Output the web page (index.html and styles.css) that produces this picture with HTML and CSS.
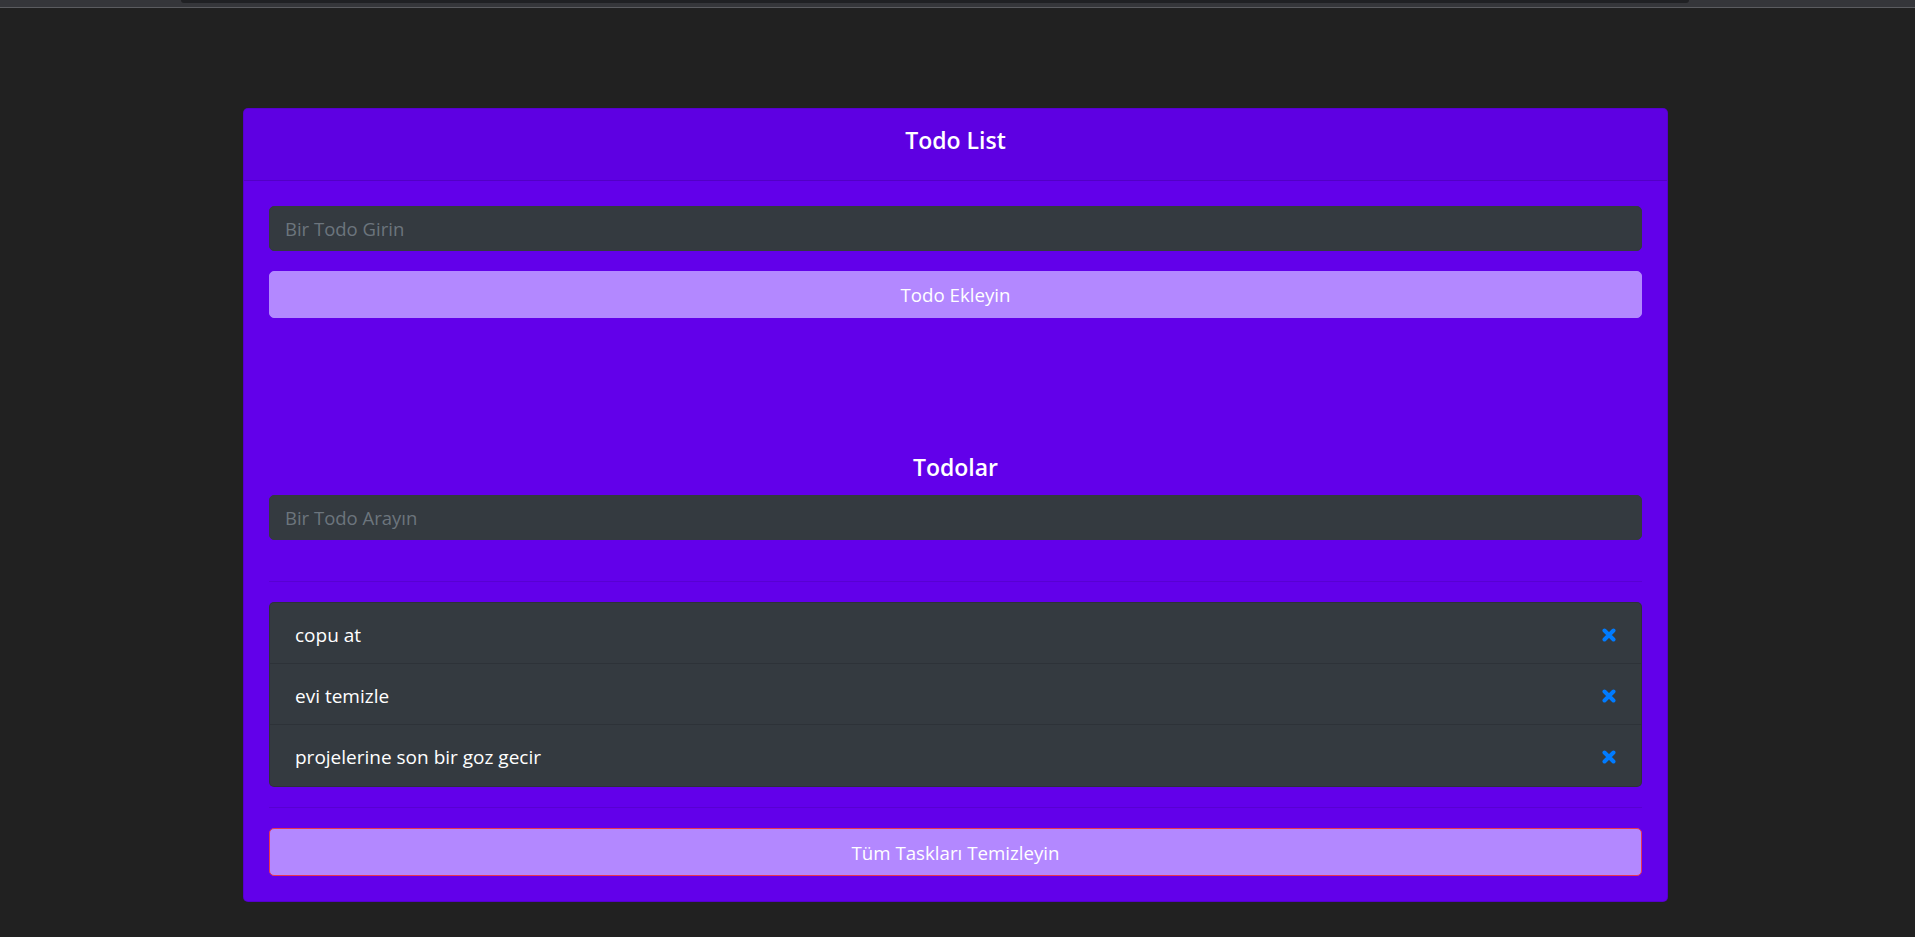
FILE: index.html
```html
<!DOCTYPE html>
<html lang="tr">
<head>
<meta charset="utf-8">
<title>Todo List</title>
<link rel="stylesheet" href="styles.css">
</head>
<body>
<div class="chrome"><div class="chrome-tab"></div></div>
<main class="page">
  <section class="card">
    <header class="card-header">
      <h5 class="card-title">Todo List</h5>
    </header>
    <div class="card-body">
      <form class="add-form">
        <input class="field" type="text" placeholder="Bir Todo Girin">
        <button class="btn btn-add" type="button">Todo Ekleyin</button>
      </form>
      <h5 class="section-title">Todolar</h5>
      <input class="field" type="text" placeholder="Bir Todo Arayın">
      <hr class="divider divider-search">
      <ul class="list">
        <li class="list-item"><span>copu at</span>
          <svg class="del" viewBox="0 0 14 14" aria-hidden="true"><path d="M2.5 2.5 L11.5 11.5 M11.5 2.5 L2.5 11.5"/></svg></li>
        <li class="list-item"><span>evi temizle</span>
          <svg class="del" viewBox="0 0 14 14" aria-hidden="true"><path d="M2.5 2.5 L11.5 11.5 M11.5 2.5 L2.5 11.5"/></svg></li>
        <li class="list-item"><span>projelerine son bir goz gecir</span>
          <svg class="del" viewBox="0 0 14 14" aria-hidden="true"><path d="M2.5 2.5 L11.5 11.5 M11.5 2.5 L2.5 11.5"/></svg></li>
      </ul>
      <hr class="divider">
      <button class="btn btn-clear" type="button">Tüm Taskları Temizleyin</button>
    </div>
  </section>
</main>
</body>
</html>
```

FILE: styles.css
```css
* { box-sizing: border-box; }
html, body { margin: 0; padding: 0; }
body {
  background: #212121;
  font-family: "Open Sans", "Noto Sans", "Liberation Sans", sans-serif;
  font-size: 20px;
  color: #fff;
  height: 937px;
  overflow: hidden;
}
.chrome {
  height: 8px;
  background: #35363a;
  border-bottom: 1px solid #5b5c60;
  display: flex;
  padding-left: 181px;
}
.chrome-tab {
  width: 1508px;
  height: 3px;
  background: #202124;
  border-radius: 0 0 3px 3px;
}
.page {
  padding: 100px 0 0 243px;
}
.card {
  width: 1425px;
  background: #6200ea;
  border: 1px solid rgba(0,0,0,.125);
  border-radius: 5px;
  overflow: hidden;
}
.card-header {
  background: rgba(0,0,0,.03);
  border-bottom: 1px solid rgba(0,0,0,.125);
  padding: 16px 25px 15px;
  text-align: center;
}
.card-title, .section-title {
  margin: 0 0 10px;
  font-size: 23px;
  font-weight: 600;
  line-height: 30px;
  text-align: center;
}
.card-body {
  padding: 25px 25px 25px;
  display: flex;
  flex-direction: column;
}
.add-form {
  display: flex;
  flex-direction: column;
  gap: 20px;
  margin: 0 0 134px;
}
.section-title { margin: 0 0 13px; }
.field {
  height: 45px;
  width: 100%;
  background: #343a40;
  border: 1px solid #343a40;
  border-radius: 5px;
  padding: 0 15px;
  font: inherit;
  font-size: 18.5px;
  color: #fff;
  outline: none;
}
.field::placeholder { color: #6c757d; }
.btn {
  height: 47px;
  width: 100%;
  background: #b388ff;
  border: 1px solid #b388ff;
  border-radius: 5px;
  color: #fff;
  font: inherit;
  font-size: 18.7px;
  cursor: pointer;
}
.btn-clear {
  height: 48px;
  border-color: #e83552;
}
.divider {
  width: 100%;
  margin: 20px 0;
  border: 0;
  border-top: 1px solid rgba(0,0,0,.1);
}
.divider-search { margin-top: 41px; }
.list {
  list-style: none;
  margin: 0;
  padding: 0;
  border: 1px solid rgba(0,0,0,.125);
  border-radius: 5px;
  overflow: hidden;
  background: #343a40;
}
.list-item {
  display: flex;
  align-items: center;
  justify-content: space-between;
  height: 61px;
  padding: 3px 25px 0 25px;
  font-size: 19px;
  border-top: 1px solid rgba(0,0,0,.125);
}
.list-item:first-child { border-top: 0; height: 60px; }
.list-item:last-child { height: 62px; }
.del {
  width: 14px;
  height: 14px;
  fill: none;
  stroke: #007bff;
  stroke-width: 4;
  stroke-linecap: round;
}
```
